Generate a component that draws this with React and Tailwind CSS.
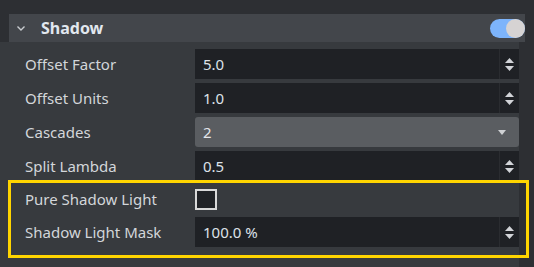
import React from 'react';

const font = { fontFamily: '"Noto Sans", "Open Sans", sans-serif' };

function Spinner() {
  return (
    <div className="w-[20px] h-full border-l border-[#2a2c30] flex flex-col items-center justify-center gap-[3px]">
      <svg width="9" height="5" viewBox="0 0 9 5">
        <polygon points="4.5,0 9,5 0,5" fill="#d2d4d8" />
      </svg>
      <svg width="9" height="5" viewBox="0 0 9 5">
        <polygon points="0,0 9,0 4.5,5" fill="#d2d4d8" />
      </svg>
    </div>
  );
}

function NumberInput({ value }) {
  return (
    <div className="w-[324px] h-full bg-[#1f2125] flex items-center">
      <span className="flex-1 pl-[8px] text-[15px] text-[#dde2e9]">{value}</span>
      <Spinner />
    </div>
  );
}

function Row({ label, children, pad = 'pl-[25px] w-[195px]', h = 'h-[30px]' }) {
  return (
    <div className={`flex items-center ${h}`}>
      <div className={`${pad} text-[15px] text-[#d3d6da] shrink-0`}>{label}</div>
      {children}
    </div>
  );
}

export default function App() {
  return (
    <div className="w-[534px] h-[267px] bg-[#2d2f33] flex flex-col pt-[14px] overflow-hidden" style={font}>
      {/* Section header */}
      <div className="ml-[9px] w-[516px] h-[28px] bg-[#43464b] flex items-center shrink-0">
        <svg className="ml-[8px]" width="8" height="5" viewBox="0 0 8 5">
          <polyline points="0.5,0.5 4,4 7.5,0.5" fill="none" stroke="#c9ccd0" strokeWidth="1.4" />
        </svg>
        <span className="ml-[16px] text-[16px] font-bold text-[#e2e8ef]">Shadow</span>
        <div className="ml-auto w-[35px] h-[19px] rounded-full bg-[#7db4fb] flex justify-end">
          <div className="w-[19px] h-[19px] rounded-full bg-[#d6d3d3]" />
        </div>
      </div>

      {/* Properties */}
      <div className="w-[519px] flex-1 bg-[#373a3e] pt-[7px] flex flex-col gap-[4px]">
        <Row label="Offset Factor"><NumberInput value="5.0" /></Row>
        <Row label="Offset Units"><NumberInput value="1.0" /></Row>
        <Row label="Cascades">
          <div className="w-[324px] h-full bg-[#5a5d61] rounded-[3px] flex items-center">
            <span className="flex-1 pl-[8px] text-[15px] text-[#e4e6ea]">2</span>
            <svg className="mr-[13px]" width="8" height="5" viewBox="0 0 8 5">
              <polygon points="0,0 8,0 4,5" fill="#cfd1d4" />
            </svg>
          </div>
        </Row>
        <Row label="Split Lambda"><NumberInput value="0.5" /></Row>

        {/* Highlighted group */}
        <div className="-mt-[5px] ml-[8px] w-[521px] border-[3px] border-[#ffd500] pt-[1px] pb-[8px] flex flex-col gap-[3px]">
          <Row label="Pure Shadow Light" pad="pl-[14px] w-[184px]">
            <div className="w-[22px] h-[21px] border-2 border-[#d9d9d9] bg-[#202226]" />
          </Row>
          <Row label="Shadow Light Mask" pad="pl-[14px] w-[184px]">
            <NumberInput value="100.0 %" />
          </Row>
        </div>
      </div>
    </div>
  );
}
